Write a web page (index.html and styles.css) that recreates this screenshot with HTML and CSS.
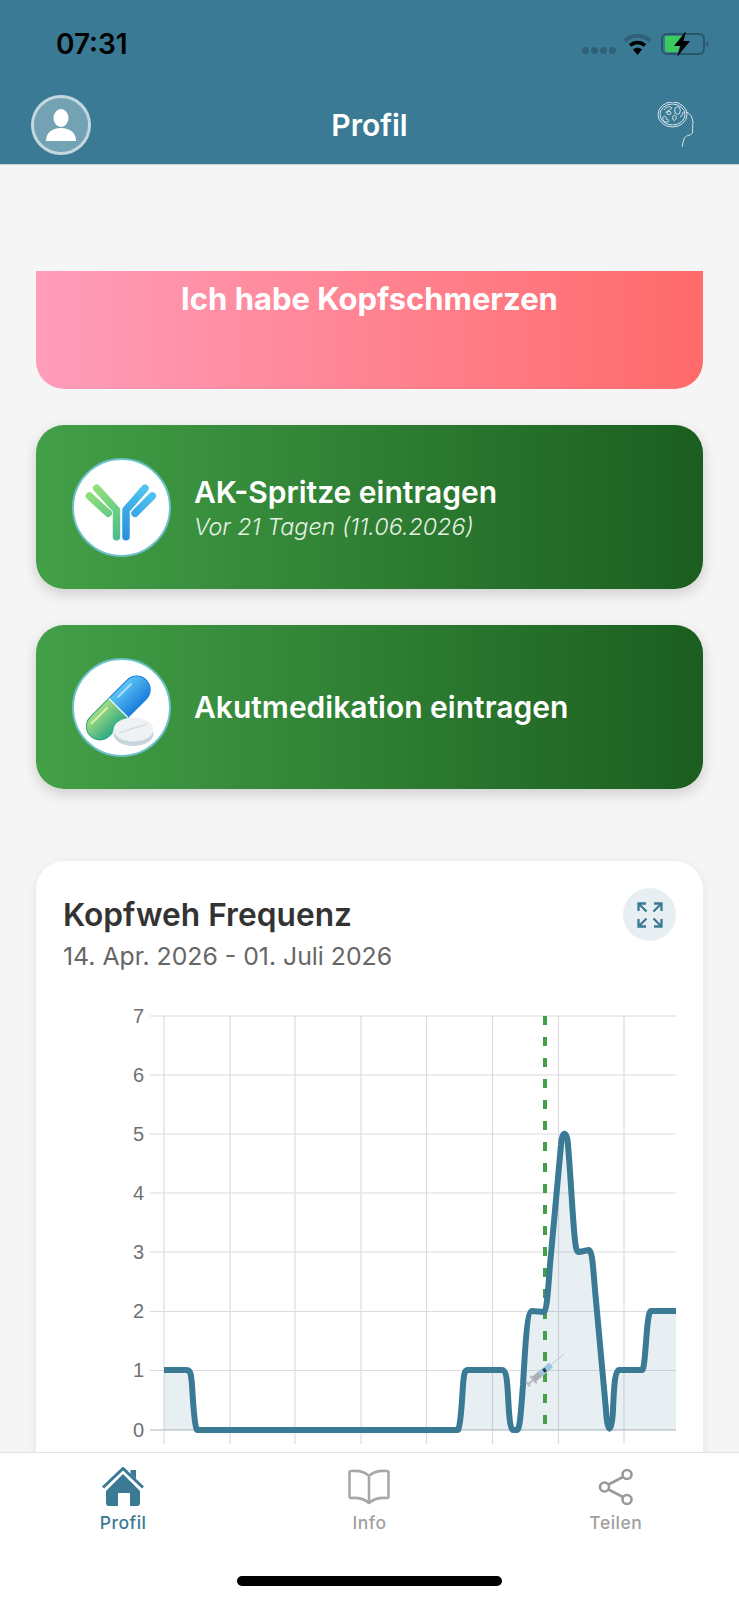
FILE: index.html

```html
<!DOCTYPE html>
<html lang="de">
<head>
  <meta charset="UTF-8" />
  <title>Profil</title>
  <link rel="stylesheet" href="styles.css">
</head>
<body>
  <div class="app">
    <header class="top-bar">
      <div class="status-bar">
        <span class="status-time">07:31</span>
        <div class="status-icons">
          <div class="signal-dots"><i></i><i></i><i></i><i></i></div>
          <svg class="wifi-icon" width="27" height="21" viewBox="0 0 27 21">
            <path d="M1 7 C8 0 19 0 26 7" fill="none" stroke="#2f6178" stroke-width="4"></path>
            <path d="M6 11.5 C10.500 7.500 16.500 7.500 21 11.500" fill="none" stroke="#000" stroke-width="3.500"></path>
            <path d="M9 15.500 C11.500 13 15.500 13 18 15.500 L13.500 21 Z" fill="#000"></path>
          </svg>
          <svg class="battery-icon" width="50" height="24" viewBox="0 0 50 24">
            <rect x="1" y="2" width="42" height="20" rx="5" fill="none" stroke="#2a566b" stroke-width="2"></rect>
            <path d="M4 4 H21 L17 20 H6 Q4 20 4 18 Z" fill="#3cc95e"></path>
            <path d="M45.500 9 Q49 12 45.500 15 Z" fill="#2a566b"></path>
            <path d="M25 -1 L13 14 H19.500 L16 25 L29 9 H22.500 Z" fill="#000"></path>
          </svg>
        </div>
      </div>
      <div class="nav-bar">
        <div class="avatar">
          <svg width="34" height="34" viewBox="0 0 34 34">
            <ellipse cx="17" cy="10" rx="7.500" ry="9" fill="#fff"></ellipse>
            <path d="M2 33 C2 25 8 20 17 20 C26 20 32 25 32 33 Z" fill="#fff"></path>
          </svg>
        </div>
        <h1 class="nav-title">Profil</h1>
        <svg class="brain-icon" width="38" height="46" viewBox="0 0 38 46" fill="none" stroke="#d5e5ec" stroke-width="1">
          <ellipse cx="15.500" cy="12.500" rx="14.500" ry="12.500"></ellipse>
          <ellipse cx="15.500" cy="12.500" rx="12.500" ry="10.500"></ellipse>
          <path d="M29 9.700 C32 11 33.500 13 34.700 14.700 L36.300 21.300 L35 22.500 L36 24 L35.300 26.300 L35.800 28 L35.300 31.300 C33 34 28 33 27 37 C26 40 25.500 42 25.300 44.700"></path>
          <path d="M7 8 C9 4 14 4 15 6 C13 9 9 8 9 11"></path>
          <ellipse cx="20.500" cy="8.500" rx="2.800" ry="3.800"></ellipse>
          <ellipse cx="12" cy="11" rx="2" ry="1.600"></ellipse>
          <path d="M6 15 C8 13 10 15 9 17 C12 17 13 20 10 20 C7 20 5 18 6 15 Z"></path>
          <path d="M16 14 C18 12 20 14 19 17 C17 20 15 18 16 14 Z"></path>
          <path d="M23 15 C25 14 26 12 26 10"></path>
        </svg>
      </div>
    </header>

    <main class="content">
      <div class="pain-card">Ich habe Kopfschmerzen</div>

      <div class="action-card">
        <div class="action-icon">
          <svg width="95" height="95" viewBox="2 2 95 95" fill="none" stroke-width="7.500" stroke-linecap="round" stroke-linejoin="round">
            <defs>
              <linearGradient id="abGreen" gradientUnits="userSpaceOnUse" x1="20" y1="30" x2="44" y2="80">
                <stop offset="0" stop-color="#93e07a"></stop>
                <stop offset="1" stop-color="#4dbd8e"></stop>
              </linearGradient>
              <linearGradient id="abBlue" gradientUnits="userSpaceOnUse" x1="78" y1="30" x2="54" y2="80">
                <stop offset="0" stop-color="#50c6f0"></stop>
                <stop offset="1" stop-color="#2a8fe0"></stop>
              </linearGradient>
            </defs>
            <path d="M24.700 30.300 L44.500 52 V78.700" stroke="url(#abGreen)"></path>
            <path d="M17.300 38 L36.300 55.300" stroke="url(#abGreen)"></path>
            <path d="M73 30.300 L54 52 V78.700" stroke="url(#abBlue)"></path>
            <path d="M80.300 38 L63 55.300" stroke="url(#abBlue)"></path>
          </svg>
        </div>
        <div class="action-text">
          <div class="action-title">AK-Spritze eintragen</div>
          <div class="action-sub">Vor 21 Tagen (11.06.2026)</div>
        </div>
      </div>

      <div class="action-card">
        <div class="action-icon">
          <svg width="95" height="95" viewBox="2 2 95 95">
            <defs>
              <linearGradient id="pillGreen" x1="0" y1="1" x2="0" y2="0">
                <stop offset="0" stop-color="#2eaa86"></stop>
                <stop offset="1" stop-color="#a6dc7c"></stop>
              </linearGradient>
              <linearGradient id="pillBlue" x1="0" y1="1" x2="0" y2="0">
                <stop offset="0" stop-color="#1b7fdc"></stop>
                <stop offset="1" stop-color="#5cc4f4"></stop>
              </linearGradient>
            </defs>
            <g transform="translate(46.300 50) rotate(-45)">
              <path d="M0 -13.500 H-26 A13.500 13.500 0 0 0 -26 13.500 H0 Z" fill="url(#pillGreen)" stroke="#2ba585" stroke-width="1"></path>
              <path d="M0 -13.500 H26 A13.500 13.500 0 0 1 26 13.500 H0 Z" fill="url(#pillBlue)" stroke="#1a7fd6" stroke-width="1"></path>
              <path d="M0 -13.500 V13.500" stroke="#e8f6f4" stroke-width="1.500"></path>
              <path d="M8 -8 H26" stroke="#a8e0fa" stroke-width="2" stroke-linecap="round"></path>
              <path d="M-30 -8 H-8" stroke="#d6f0b4" stroke-width="2" stroke-linecap="round"></path>
            </g>
            <ellipse cx="61.500" cy="76" rx="21" ry="13" fill="#fff"></ellipse>
            <ellipse cx="61.500" cy="76" rx="20" ry="12" fill="#c9d4da"></ellipse>
            <ellipse cx="61.500" cy="71.500" rx="20" ry="12" fill="#eef2f4"></ellipse>
            <path d="M47 75 L75 66" stroke="#cfd8dd" stroke-width="1.200"></path>
          </svg>
        </div>
        <div class="action-text">
          <div class="action-title">Akutmedikation eintragen</div>
        </div>
      </div>

      <section class="chart-card">
        <div class="chart-head">
          <div class="chart-heading">
            <h2 class="chart-title">Kopfweh Frequenz</h2>
            <div class="chart-range">14. Apr. 2026 - 01. Juli 2026</div>
          </div>
          <div class="expand-btn">
            <svg width="26" height="26" viewBox="0 0 26 26" fill="none" stroke="#3a7a94" stroke-width="2.300">
              <path d="M1.500 9 V1.500 H9 M1.500 1.500 L9.500 9.500"></path>
              <path d="M17 1.500 H24.500 V9 M24.500 1.500 L16.500 9.500"></path>
              <path d="M1.500 17 V24.500 H9 M1.500 24.500 L9.500 16.500"></path>
              <path d="M17 24.500 H24.500 V17 M24.500 24.500 L16.500 16.500"></path>
            </svg>
          </div>
        </div>

        <svg class="chart" width="640" height="460" viewBox="63 1000 640 460">
          <g class="grid">
            <path d="M150 1016 H676 M150 1075 H676 M150 1134 H676 M150 1193 H676 M150 1252 H676 M150 1311.500 H676 M150 1370.500 H676"></path>
            <path d="M164 1016 V1444 M230 1016 V1444 M295 1016 V1444 M361 1016 V1444 M426.500 1016 V1444 M492.500 1016 V1444 M558.500 1016 V1444 M624 1016 V1444"></path>
          </g>
          <path class="base" d="M150 1430 H676"></path>
          <path class="area" d="M164 1370 H186 C190 1370 191 1372 192 1385 C193 1400 194 1425 197 1430 H458 C461 1425 462 1400 463 1385 C464 1372 465 1370 468 1370 H502 C506 1370 507 1378 508 1395 C509 1415 510 1430 513 1430 H517 C520 1430 521 1410 523 1385 C525 1350 527 1311 532 1311 L544 1312 C547 1310 548 1290 550 1265 L561 1145 C562 1130 567 1130 568 1145 C571 1180 573 1225 575 1240 C576 1250 577 1252 579 1252 L589 1250 C592 1250 593 1265 595 1290 L606 1410 C607 1435 612 1435 613 1410 C614 1385 615 1370 619 1370 H642 C646 1370 646 1311 651 1311 H676 V1430 H164 Z"></path>
          <path class="dash" d="M545 1016 V1430"></path>
          <path class="line" d="M164 1370 H186 C190 1370 191 1372 192 1385 C193 1400 194 1425 197 1430 H458 C461 1425 462 1400 463 1385 C464 1372 465 1370 468 1370 H502 C506 1370 507 1378 508 1395 C509 1415 510 1430 513 1430 H517 C520 1430 521 1410 523 1385 C525 1350 527 1311 532 1311 L544 1312 C547 1310 548 1290 550 1265 L561 1145 C562 1130 567 1130 568 1145 C571 1180 573 1225 575 1240 C576 1250 577 1252 579 1252 L589 1250 C592 1250 593 1265 595 1290 L606 1410 C607 1435 612 1435 613 1410 C614 1385 615 1370 619 1370 H642 C646 1370 646 1311 651 1311 H676"></path>
          <g transform="translate(545 1370) rotate(-40)">
            <path d="M8 0 H24" stroke="#b9bec2" stroke-width="0.800"></path>
            <rect x="-6" y="-3" width="14" height="6" fill="#9cc7e4"></rect>
            <rect x="-15" y="-3" width="9" height="6" fill="#a9aeb2"></rect>
            <rect x="-2" y="-2" width="3" height="4" fill="#2c3a44"></rect>
            <path d="M-15 -5 V5 M-22 0 H-15 M-22 -3 V3" stroke="#b5b8bb" stroke-width="2"></path>
          </g>
          <g class="y-labels">
            <text x="144" y="1023">7</text>
            <text x="144" y="1082">6</text>
            <text x="144" y="1141">5</text>
            <text x="144" y="1200">4</text>
            <text x="144" y="1259">3</text>
            <text x="144" y="1318">2</text>
            <text x="144" y="1377">1</text>
            <text x="144" y="1437">0</text>
          </g>
        </svg>
      </section>
    </main>

    <nav class="tab-bar">
      <div class="tab active">
        <svg width="42" height="40" viewBox="0 0 42 40">
          <path d="M1 20.500 L21 1.500 L41 20.500" fill="none" stroke="#3a7a94" stroke-width="3"></path>
          <path d="M28.500 3 H34 V12 L28.500 7 Z" fill="#3a7a94"></path>
          <path d="M4 24 L21 7 L38 24 V36 Q38 39 35 39 H28 V26 H16 V39 H7 Q4 39 4 36 Z" fill="#3a7a94"></path>
        </svg>
        <span>Profil</span>
      </div>
      <div class="tab">
        <svg width="42" height="36" viewBox="0 0 42 36" fill="none" stroke="#a8a8a8" stroke-width="2.600" stroke-linejoin="round">
          <path d="M21 7 C17 2.500 9 1.500 3 2 Q1.500 2 1.500 3.500 V27.500 Q1.500 29 3 29 C9 28.500 16 29.500 21 34 C26 29.500 33 28.500 39 29 Q40.500 29 40.500 27.500 V3.500 Q40.500 2 39 2 C33 1.500 25 2.500 21 7 V34"></path>
        </svg>
        <span>Info</span>
      </div>
      <div class="tab">
        <svg width="36" height="38" viewBox="0 0 36 38" fill="none" stroke="#999" stroke-width="2.600">
          <circle cx="29" cy="6.500" r="4.500"></circle>
          <circle cx="6.500" cy="19" r="4.500"></circle>
          <circle cx="29" cy="31.500" r="4.500"></circle>
          <path d="M10.500 16.500 L25 9 M10.500 21.500 L25 29"></path>
        </svg>
        <span>Teilen</span>
      </div>
      <div class="home-indicator"></div>
    </nav>
  </div>
</body>
</html>
```

FILE: styles.css

```css
:root {
  --teal: #3a7a94;
  --page: #f5f5f5;
  --dark: #333;
  --gray: #666;
}

* {
  box-sizing: border-box;
}

body {
  margin: 0;
  background: var(--page);
  font-family: 'Inter', 'Liberation Sans', sans-serif;
  color: var(--dark);
}

.app {
  width: 739px;
  height: 1600px;
  display: flex;
  flex-direction: column;
  overflow: hidden;
}

.top-bar {
  flex: none;
  height: 165px;
  background: var(--teal);
  border-bottom: 1px solid #c9cfd2;
}

.status-bar {
  height: 88px;
  padding: 0 28px 0 56px;
  display: flex;
  justify-content: space-between;
  align-items: center;
}

.status-time {
  color: #000;
  font-size: 28px;
  font-weight: 600;
}

.status-icons {
  display: flex;
  align-items: center;
}

.signal-dots {
  display: flex;
  gap: 2px;
  margin-top: 12px;
  margin-right: 8px;
}

.signal-dots i {
  width: 7px;
  height: 7px;
  border-radius: 50%;
  background: #2f6178;
}

.wifi-icon {
  margin-right: 10px;
}

.nav-bar {
  height: 74px;
  padding: 0 44px 0 31px;
  display: flex;
  align-items: center;
  justify-content: space-between;
  position: relative;
}

.avatar {
  width: 60px;
  height: 60px;
  border-radius: 50%;
  border: 3px solid #c4d6de;
  background: #74a2b5;
  display: flex;
  align-items: center;
  justify-content: center;
}

.nav-title {
  position: absolute;
  left: 0;
  right: 0;
  margin: 0;
  text-align: center;
  color: #fff;
  font-size: 30px;
  font-weight: 600;
}

.content {
  flex: 1;
  min-height: 0;
  overflow: hidden;
  padding: 106px 36px 0;
  display: flex;
  flex-direction: column;
  gap: 36px;
}

.pain-card {
  flex: none;
  height: 118px;
  padding-top: 9px;
  border-radius: 0 0 28px 28px;
  background: linear-gradient(90deg, #ff9dbb, #ff6a6a);
  color: #fff;
  font-size: 31px;
  font-weight: 700;
  text-align: center;
}

.action-card {
  flex: none;
  height: 164px;
  padding: 0 36px;
  border-radius: 28px;
  background: linear-gradient(90deg, #43a047, #1b5e20);
  box-shadow: 0 5px 14px rgba(0, 0, 0, 0.16);
  display: flex;
  align-items: center;
  gap: 23px;
  color: #fff;
}

.action-icon {
  flex: none;
  width: 99px;
  height: 99px;
  border-radius: 50%;
  border: 2px solid #6cc0c8;
  background: #fff;
}

.action-title {
  font-size: 30px;
  font-weight: 600;
  line-height: 36px;
}

.action-sub {
  margin-top: 3px;
  font-size: 23.300px;
  font-style: italic;
  font-weight: 300;
  line-height: 27px;
  color: #e4f2e4;
}

.chart-card {
  flex: none;
  margin-top: 36px;
  height: 640px;
  padding: 27px 27px 0;
  border-radius: 28px;
  background: #fff;
  box-shadow: 0 2px 10px rgba(0, 0, 0, 0.08);
}

.chart-head {
  display: flex;
  justify-content: space-between;
  align-items: flex-start;
}

.chart-heading {
  padding-top: 8px;
}

.chart-title {
  margin: 0;
  font-size: 31.700px;
  font-weight: 600;
  line-height: 38px;
  color: var(--dark);
}

.chart-range {
  margin-top: 7px;
  font-size: 24.800px;
  line-height: 30px;
  color: var(--gray);
}

.expand-btn {
  width: 53px;
  height: 53px;
  border-radius: 50%;
  background: #e8eff3;
  display: flex;
  align-items: center;
  justify-content: center;
}

.chart {
  display: block;
  margin-top: 29px;
}

.grid path {
  fill: none;
  stroke: #dbdcdf;
  stroke-width: 1.200;
}

.base {
  fill: none;
  stroke: #c9cbd0;
  stroke-width: 1.500;
}

.area {
  fill: #3a7a94;
  fill-opacity: 0.12;
}

.dash {
  fill: none;
  stroke: #43a047;
  stroke-width: 4;
  stroke-dasharray: 9 12;
}

.line {
  fill: none;
  stroke: var(--teal);
  stroke-width: 6;
  stroke-linejoin: round;
}

.y-labels text {
  font-family: 'Liberation Sans', sans-serif;
  font-size: 20px;
  fill: #707070;
  text-anchor: end;
}

.tab-bar {
  flex: none;
  height: 148px;
  background: #fff;
  border-top: 1px solid #e2e2e2;
  display: grid;
  grid-template-columns: repeat(3, 1fr);
  position: relative;
}

.tab {
  height: 78px;
  padding-top: 14px;
  display: flex;
  flex-direction: column;
  align-items: center;
  justify-content: flex-start;
  color: #a0a0a0;
  font-size: 17.500px;
  font-weight: 500;
  letter-spacing: 0.5px;
}

.tab svg {
  height: 40px;
  flex: none;
}

.tab span {
  margin-top: 5px;
}

.tab.active {
  color: var(--teal);
}

.home-indicator {
  position: absolute;
  left: 237px;
  bottom: 14px;
  width: 265px;
  height: 10px;
  border-radius: 5px;
  background: #000;
}
```
